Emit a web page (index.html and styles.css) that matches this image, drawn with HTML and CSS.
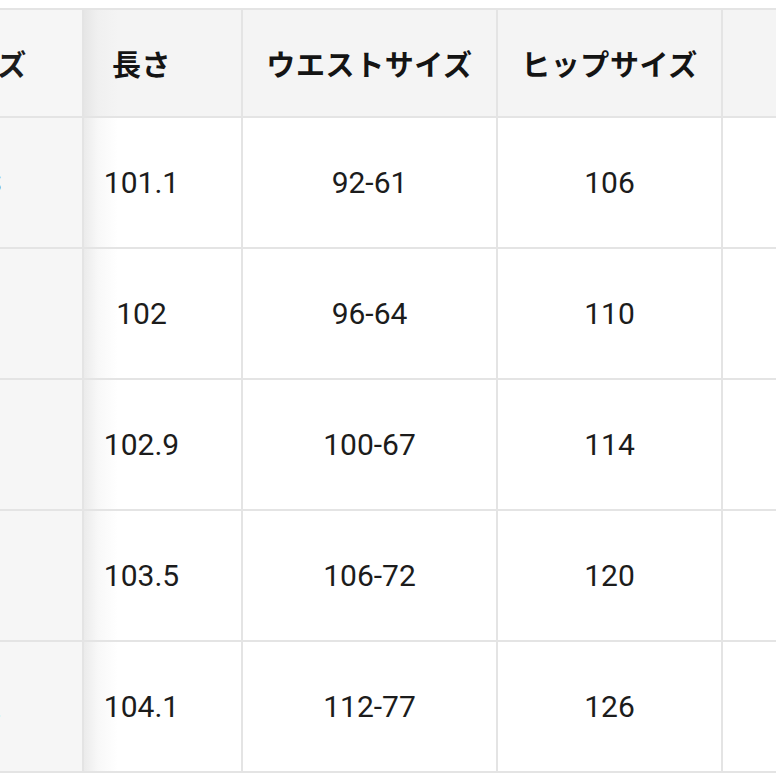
FILE: index.html
```html
<!DOCTYPE html>
<html lang="ja">
<head>
<meta charset="utf-8">
<link rel="stylesheet" href="styles.css">
</head>
<body>
<div class="scroller">
  <table class="size-table">
    <colgroup>
      <col class="c1"><col class="c2"><col class="c3"><col class="c4"><col class="c5">
    </colgroup>
    <thead>
      <tr>
        <th class="sticky">サイズ</th>
        <th class="len">長さ</th>
        <th>ウエストサイズ</th>
        <th>ヒップサイズ</th>
        <th></th>
      </tr>
    </thead>
    <tbody>
      <tr><td class="sticky">XS</td><td class="len">101.1</td><td>92-61</td><td>106</td><td></td></tr>
      <tr><td class="sticky">S</td><td class="len">102</td><td>96-64</td><td>110</td><td></td></tr>
      <tr><td class="sticky">M</td><td class="len">102.9</td><td>100-67</td><td>114</td><td></td></tr>
      <tr><td class="sticky">L</td><td class="len">103.5</td><td>106-72</td><td>120</td><td></td></tr>
      <tr><td class="sticky">XL</td><td class="len">104.1</td><td>112-77</td><td>126</td><td></td></tr>
    </tbody>
  </table>
</div>
</body>
</html>
```

FILE: styles.css
```css
html, body {
  margin: 0;
  padding: 0;
  background: #ffffff;
}

.scroller {
  width: 776px;
  height: 776px;
  overflow: hidden;
  padding-top: 8px;
  box-sizing: border-box;
}

.size-table {
  margin-left: -118px;
  border-collapse: collapse;
  table-layout: fixed;
  width: 1099px;
  font-family: Roboto, "Noto Sans CJK JP", sans-serif;
  color: #1c1c1c;
}

.c1 { width: 200px; }
.c2 { width: 159px; }
.c3 { width: 255px; }
.c4 { width: 225px; }
.c5 { width: 260px; }

.size-table th,
.size-table td {
  border: 2px solid #e4e4e4;
  text-align: center;
  vertical-align: middle;
  padding: 0;
}

.size-table th {
  height: 106px;
  background: #f4f4f4;
  font-family: "Noto Sans CJK JP", sans-serif;
  font-weight: 700;
  font-size: 29px;
  color: #141414;
  letter-spacing: 0.6px;
}

.size-table td {
  height: 129px;
  background: #ffffff;
  font-size: 30px;
  font-weight: 400;
}

.size-table td.sticky,
.size-table th.sticky {
  background: #f6f6f6;
  color: #1c1c1c;
}

.size-table .len {
  padding-right: 42px;
}

.size-table td.len {
  background: linear-gradient(to right, #ebebeb 0px, #f8f8f8 14px, #ffffff 34px);
}

.size-table th.len {
  background: linear-gradient(to right, #e6e6e6 0px, #f0f0f0 14px, #f4f4f4 34px);
}
```
